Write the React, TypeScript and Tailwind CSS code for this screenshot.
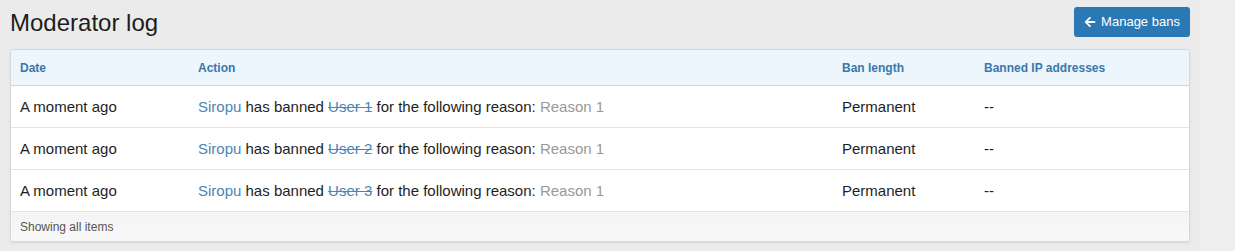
import { FaArrowLeft } from "react-icons/fa";

type Row = { date: string; user: string; length: string; ips: string };

const rows: Row[] = [
  { date: "A moment ago", user: "User 1", length: "Permanent", ips: "--" },
  { date: "A moment ago", user: "User 2", length: "Permanent", ips: "--" },
  { date: "A moment ago", user: "User 3", length: "Permanent", ips: "--" },
];

export default function App() {
  return (
    <div className="flex h-[251px] w-[1235px] bg-[#ebebeb] font-['Liberation_Sans',Arial,sans-serif] text-[#222]">
      <div className="w-[1200px] pl-[10px] pr-[10px] pt-[7px]">
        <div className="flex items-start justify-between">
          <h1 className="mt-[1px] text-[24px] leading-[30px] text-[#1d1d1d]">Moderator log</h1>
          <button className="flex h-[30px] w-[116px] items-center justify-center gap-[5px] rounded-[3px] bg-[#2a78b4] text-[13px] text-white">
            <FaArrowLeft className="h-[12px] w-[12px]" />
            Manage bans
          </button>
        </div>

        <div className="mt-[11px] overflow-hidden rounded-[3px] border border-[#d8d8d8] bg-white shadow-[0_1px_2px_rgba(0,0,0,0.08)]">
          <div className="grid h-[36px] grid-cols-[178px_644px_142px_1fr] items-center border-b border-[#d3d3d3] bg-[#edf5fd] text-[12px] font-bold text-[#3a78ab]">
            <div className="pl-[9px] pr-[10px]">Date</div>
            <div className="pl-[9px] pr-[10px]">Action</div>
            <div className="pl-[9px] pr-[10px]">Ban length</div>
            <div className="pl-[9px] pr-[10px]">Banned IP addresses</div>
          </div>
          {rows.map((r) => (
            <div
              key={r.user}
              className="grid h-[42px] grid-cols-[178px_644px_142px_1fr] items-center border-b border-[#e3e3e3] pt-[1px] text-[15px] text-[#1e1e1e]"
            >
              <div className="pl-[9px] pr-[10px]">{r.date}</div>
              <div className="pl-[9px] pr-[10px]">
                <span className="text-[#4a86b3]">Siropu</span> has banned{" "}
                <span className="text-[#4a86b3] line-through">{r.user}</span> for the following reason:{" "}
                <span className="text-[#999]">Reason 1</span>
              </div>
              <div className="pl-[9px] pr-[10px]">{r.length}</div>
              <div className="pl-[9px] pr-[10px]">{r.ips}</div>
            </div>
          ))}
          <div className="flex h-[29px] items-center bg-gradient-to-b from-[#f4f4f4] to-[#f8f8f8] pl-[9px] pr-[10px] text-[12px] text-[#555]">
            Showing all items
          </div>
        </div>
      </div>
      <div className="flex-1 bg-[#eeeeee]" />
    </div>
  );
}
